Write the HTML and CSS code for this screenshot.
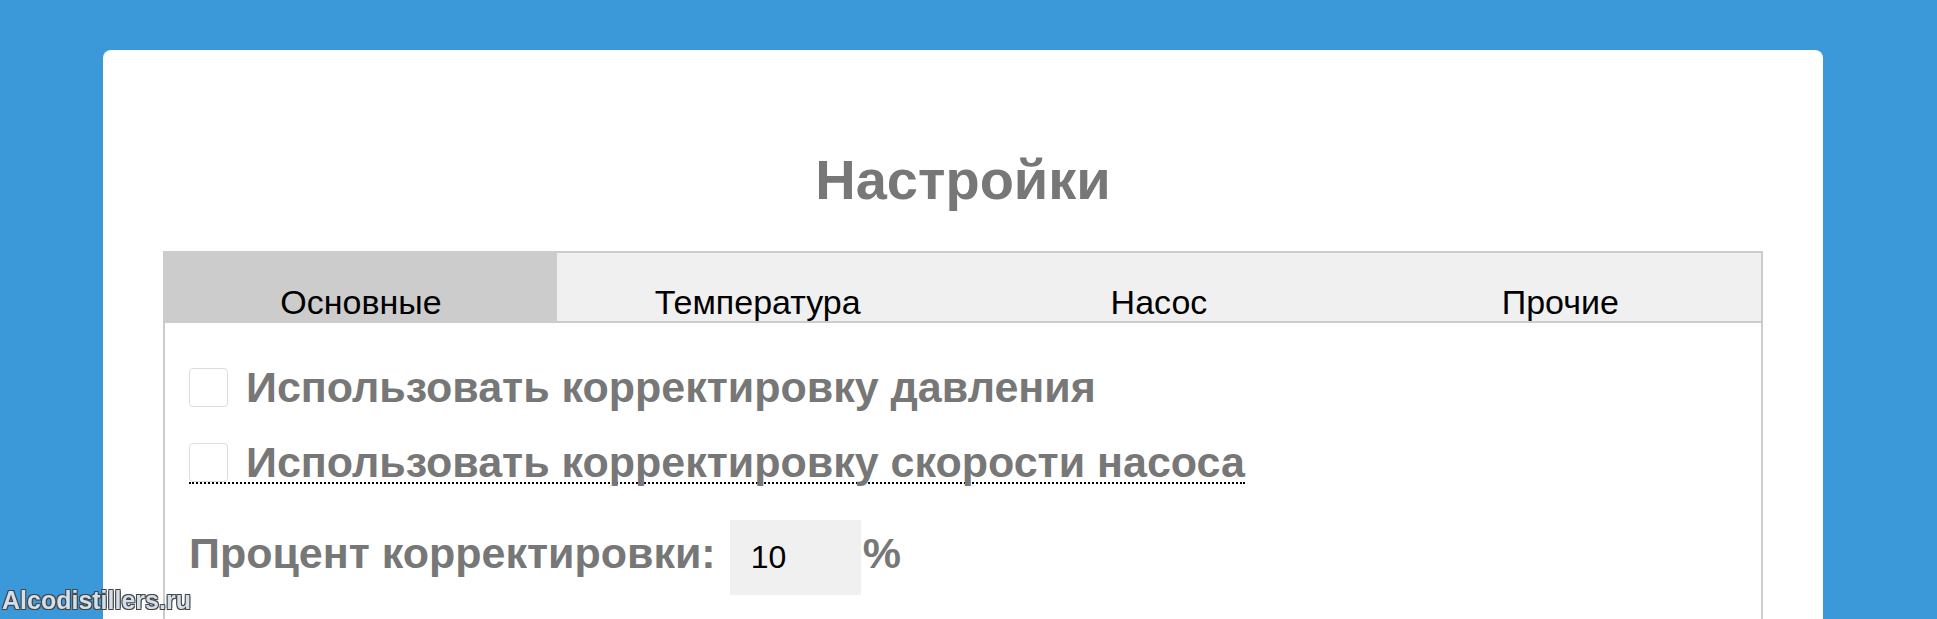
FILE: index.html
```html
<!DOCTYPE html>
<html lang="ru">
<head>
  <meta charset="UTF-8" />
  <title>Настройки</title>
  <link rel="stylesheet" href="styles.css">
</head>
<body>
  <div class="card">
    <h1>Настройки</h1>

    <div class="tabs">
      <ul class="tab-list">
        <li class="tab active">Основные</li>
        <li class="tab">Температура</li>
        <li class="tab">Насос</li>
        <li class="tab">Прочие</li>
      </ul>

      <div class="tab-body">
        <label class="option">
          <input type="checkbox" id="pressure" />
          <span>Использовать корректировку давления</span>
        </label>

        <label class="option hint" title="Корректировка скорости насоса">
          <input type="checkbox" id="pumpSpeed" />
          <span>Использовать корректировку скорости насоса</span>
        </label>

        <div class="percent-row">
          <label for="percent">Процент корректировки:</label>
          <input type="text" id="percent" value="10" />
          <span>%</span>
        </div>
      </div>
    </div>
  </div>

  <div class="watermark">Alcodistillers.ru</div>
</body>
</html>
```

FILE: styles.css
```css
* {
  box-sizing: border-box;
}

body {
  margin: 0;
  background-color: #3b99d9;
  font-family: "Liberation Sans", Arial, sans-serif;
}

.card {
  width: 1720px;
  min-height: 700px;
  margin: 50px 0 0 103px;
  padding: 97px 60px 60px;
  background-color: white;
  border-radius: 8px;
}

h1 {
  margin: 0 0 39px;
  font-size: 56px;
  font-weight: bold;
  text-align: center;
  color: #777;
}

.tabs {
  border: 2px solid #ccc;
  min-height: 500px;
}

.tab-list {
  display: flex;
  margin: 0;
  padding: 0;
  list-style: none;
  background-color: #f0f0f0;
  border-bottom: 2px solid #ccc;
}

.tab {
  flex: 1;
  height: 68px;
  padding-top: 30px;
  font-size: 34px;
  text-align: center;
  color: black;
  cursor: pointer;
}

.tab.active {
  flex: 0 0 392px;
  background-color: #ccc;
}

.tab-body {
  padding: 40px 24px;
}

.option {
  display: flex;
  align-items: center;
  gap: 18px;
  font-size: 43px;
  font-weight: bold;
  color: #777;
}

.option input {
  appearance: none;
  -webkit-appearance: none;
  width: 39px;
  height: 39px;
  margin: 0;
  border: 1px solid #ddd;
  border-radius: 4px;
  background-color: white;
}

.option.hint {
  display: inline-flex;
  margin-top: 30px;
  line-height: 40px;
  border-bottom: 2px dotted black;
}

.percent-row {
  display: flex;
  align-items: baseline;
  margin-top: 34px;
  font-size: 43px;
  font-weight: bold;
  color: #777;
}

.percent-row label {
  margin-right: 14px;
}

.percent-row input {
  width: 131px;
  height: 75px;
  padding: 0 21px;
  margin-right: 2px;
  border: none;
  background-color: #f0f0f0;
  font-family: "Liberation Sans", Arial, sans-serif;
  font-size: 32px;
  color: black;
}

.watermark {
  position: fixed;
  left: 2px;
  bottom: 4px;
  font-size: 25px;
  font-weight: bold;
  color: #d3dfea;
  text-shadow: -1px -1px 0 #444, 1px -1px 0 #444, -1px 1px 0 #444, 1px 1px 0 #444;
}
```
